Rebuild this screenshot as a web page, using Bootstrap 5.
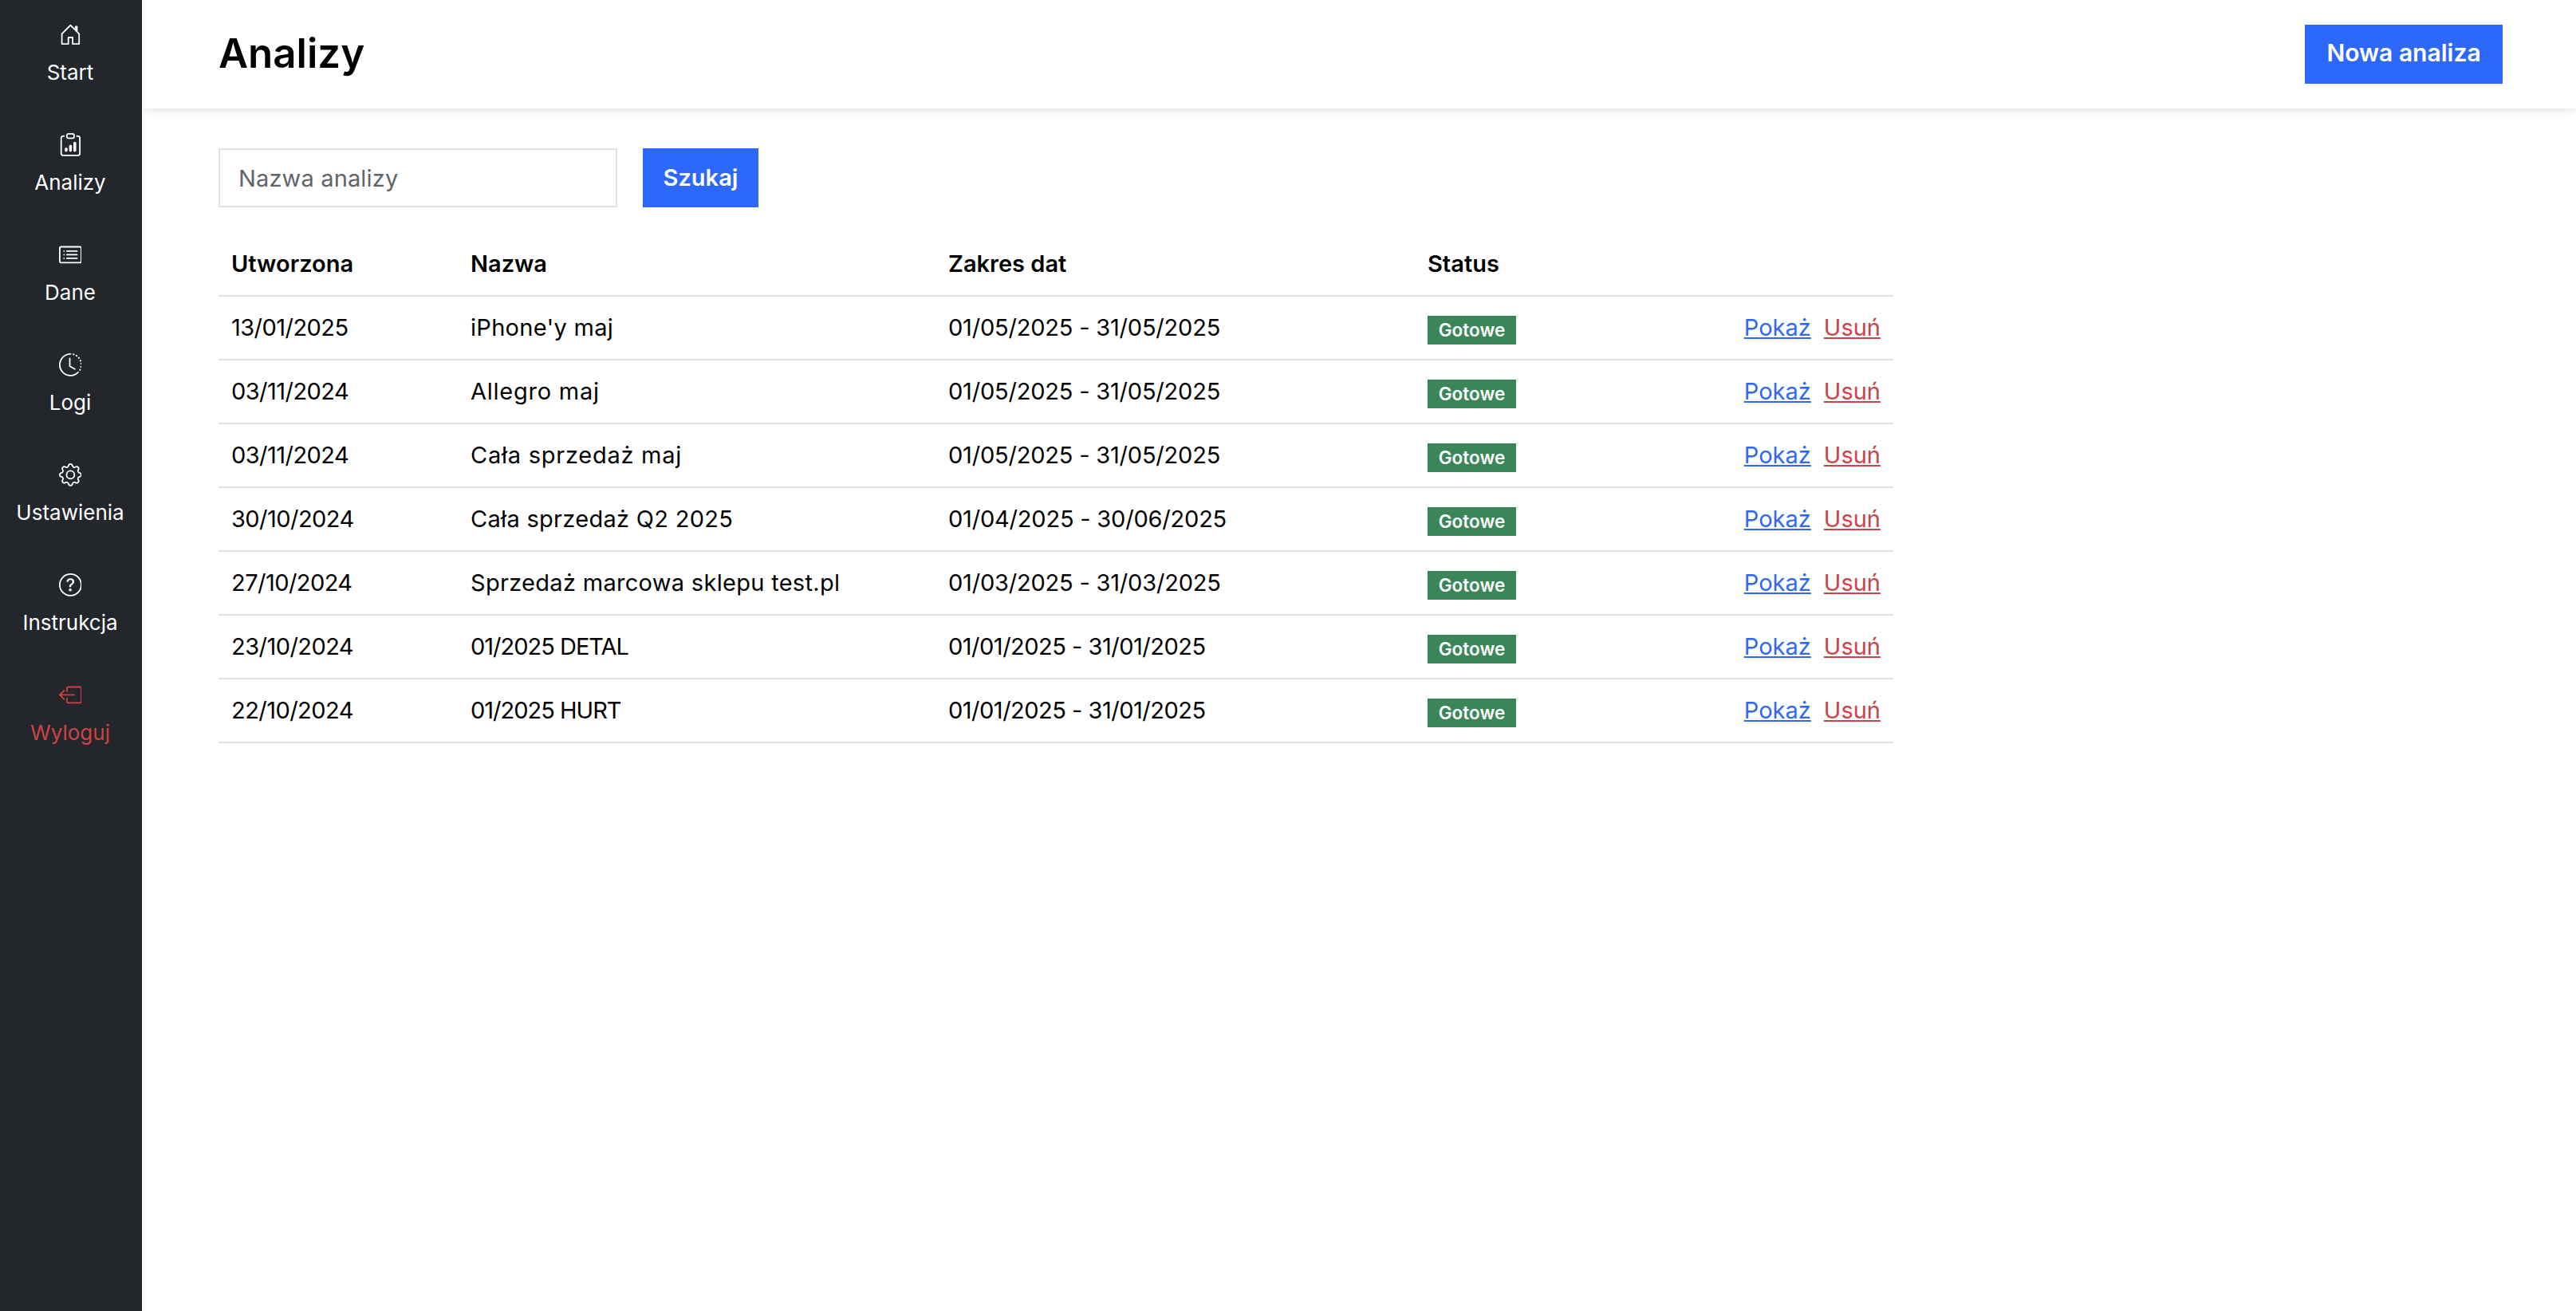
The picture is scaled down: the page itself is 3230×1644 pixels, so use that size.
<!DOCTYPE html>
<html lang="pl">
<head>
<meta charset="utf-8">
<title>Analizy</title>
<link href="https://cdn.jsdelivr.net/npm/bootstrap@5.3.0/dist/css/bootstrap.min.css" rel="stylesheet">
<style>
html,body{height:100%}
body{font-family:Inter,"Liberation Sans",sans-serif;font-size:29px;font-weight:400;color:#000;background:#fff;min-height:1644px}
.side{width:178px;background:#23272b;flex:none;padding-right:2px}
.side-item{height:138px;padding-top:29px;color:#fff;text-decoration:none;font-size:26px;line-height:36px}
.side-item:hover{color:#fff}
.side-item.out,.side-item.out:hover{color:#cf4146}
.side-item svg{width:28.8px;height:28.8px;fill:currentColor;display:block;margin-bottom:15px}
.top{height:136px;padding:0 92px 0 96px;box-shadow:0 2px 10px rgba(0,0,0,.12)}
.top h1{font-size:51px;font-weight:600;margin:0 0 3px;line-height:1}
.act{background:#2d68fb;border:0;border-radius:0;color:#fff;font-weight:600;font-size:29px;height:74px;padding:0}
.act:hover,.act:active{background:#2d68fb!important;color:#fff!important}
.act-new{width:248px;font-size:30px;padding-bottom:3px}
.act-find{width:145px}
.body-wrap{padding:50px 0 0 96px}
.find-form{gap:32px;margin-bottom:30px}
.find-input{width:500px;height:74px;border:2px solid #dee2e6;border-radius:0;font-size:29px;padding:0 23px;color:#000;letter-spacing:.15px}
.find-input::placeholder{color:#5f6468}
.data-table{width:2100px;table-layout:fixed;margin:0;--bs-table-border-color:#dee2e6}
.data-table th,.data-table td{padding:0 16px;vertical-align:middle;border-bottom:2px solid #dee2e6;color:#000}
.data-table thead tr{height:81px}
.data-table tbody tr{height:80px}
.data-table th{font-weight:600;font-size:29px;padding-top:2px}
.cw-a{width:300px}.cw-b{width:599px}.cw-c{width:601px}.cw-d{width:300px}.cw-e{width:300px}
.dt{letter-spacing:-.55px}
.rng{letter-spacing:-.2px}
.rng-t{letter-spacing:-.5px}
.nm-a{letter-spacing:.3px}
.nm-b{letter-spacing:.75px}
.nm-c{letter-spacing:-1px}
.state{background:#3b8658;color:#fff;font-weight:600;font-size:22.5px;display:inline-block;width:111px;height:36px;line-height:36px;text-align:center;vertical-align:middle;margin-top:2px}
.see{color:#2d68fb}
.del{color:#cf4146;margin-left:16px}
</style>
</head>
<body class="d-flex">
<aside class="side d-flex flex-column">
<a href="#" class="side-item d-flex flex-column align-items-center"><svg viewBox="0 0 16 16"><path d="M8.354 1.146a.5.5 0 0 0-.708 0l-6 6A.5.5 0 0 0 1.5 7.5v7a.5.5 0 0 0 .5.5h4.5a.5.5 0 0 0 .5-.5v-4h2v4a.5.5 0 0 0 .5.5H14a.5.5 0 0 0 .5-.5v-7a.5.5 0 0 0-.146-.354L13 5.793V2.5a.5.5 0 0 0-.5-.5h-1a.5.5 0 0 0-.5.5v1.293L8.354 1.146zM2.5 14V7.707l5.5-5.5 5.5 5.5V14H10v-4a.5.5 0 0 0-.5-.5h-3a.5.5 0 0 0-.5.5v4H2.5z"/></svg>Start</a>
<a href="#" class="side-item d-flex flex-column align-items-center"><svg viewBox="0 0 16 16"><path d="M4 11a1 1 0 1 1 2 0v1a1 1 0 1 1-2 0v-1zm6-4a1 1 0 1 1 2 0v5a1 1 0 1 1-2 0V7zM7 9a1 1 0 0 1 2 0v3a1 1 0 1 1-2 0V9z"/><path d="M4 1.5H3a2 2 0 0 0-2 2V14a2 2 0 0 0 2 2h10a2 2 0 0 0 2-2V3.5a2 2 0 0 0-2-2h-1v1h1a1 1 0 0 1 1 1V14a1 1 0 0 1-1 1H3a1 1 0 0 1-1-1V3.5a1 1 0 0 1 1-1h1v-1z"/><path d="M9.5 1a.5.5 0 0 1 .5.5v1a.5.5 0 0 1-.5.5h-3a.5.5 0 0 1-.5-.5v-1a.5.5 0 0 1 .5-.5h3zm-3-1A1.5 1.5 0 0 0 5 1.5v1A1.5 1.5 0 0 0 6.5 4h3A1.5 1.5 0 0 0 11 2.5v-1A1.5 1.5 0 0 0 9.5 0h-3z"/></svg>Analizy</a>
<a href="#" class="side-item d-flex flex-column align-items-center"><svg viewBox="0 0 16 16"><path d="M14.5 3a.5.5 0 0 1 .5.5v9a.5.5 0 0 1-.5.5h-13a.5.5 0 0 1-.5-.5v-9a.5.5 0 0 1 .5-.5h13zm-13-1A1.5 1.5 0 0 0 0 3.5v9A1.5 1.5 0 0 0 1.5 14h13a1.5 1.5 0 0 0 1.5-1.5v-9A1.5 1.5 0 0 0 14.5 2h-13z"/><path d="M5 8a.5.5 0 0 1 .5-.5h7a.5.5 0 0 1 0 1h-7A.5.5 0 0 1 5 8zm0-2.5a.5.5 0 0 1 .5-.5h7a.5.5 0 0 1 0 1h-7a.5.5 0 0 1-.5-.5zm0 5a.5.5 0 0 1 .5-.5h7a.5.5 0 0 1 0 1h-7a.5.5 0 0 1-.5-.5zm-1-5a.5.5 0 1 1-1 0 .5.5 0 0 1 1 0zM4 8a.5.5 0 1 1-1 0 .5.5 0 0 1 1 0zm0 2.5a.5.5 0 1 1-1 0 .5.5 0 0 1 1 0z"/></svg>Dane</a>
<a href="#" class="side-item d-flex flex-column align-items-center"><svg viewBox="0 0 16 16"><path d="M8.515 1.019A7 7 0 0 0 8 1V0a8 8 0 0 1 .589.022l-.074.997zm2.004.45a7.003 7.003 0 0 0-.985-.299l.219-.976c.383.086.76.2 1.126.342l-.36.933zm1.37.71a7.01 7.01 0 0 0-.439-.27l.493-.87a8.025 8.025 0 0 1 .979.654l-.615.789a6.996 6.996 0 0 0-.418-.302zm1.834 1.79a6.99 6.99 0 0 0-.653-.796l.724-.69c.27.285.52.59.747.91l-.818.576zm.744 1.352a7.08 7.08 0 0 0-.214-.468l.893-.45a7.976 7.976 0 0 1 .45 1.088l-.95.313a7.023 7.023 0 0 0-.179-.483zm.53 2.507a6.991 6.991 0 0 0-.1-1.025l.985-.17c.067.386.106.778.116 1.17l-1 .025zm-.131 1.538c.033-.17.06-.339.081-.51l.993.123a7.957 7.957 0 0 1-.23 1.155l-.964-.267c.046-.165.086-.332.12-.501zm-.952 2.379c.184-.29.346-.594.486-.908l.914.405c-.16.36-.345.706-.555 1.038l-.845-.535zm-.964 1.205c.122-.122.239-.248.35-.378l.758.653a8.073 8.073 0 0 1-.401.432l-.707-.707z"/><path d="M8 1a7 7 0 1 0 4.95 11.95l.707.707A8.001 8.001 0 1 1 8 0v1z"/><path d="M7.5 3a.5.5 0 0 1 .5.5v5.21l3.248 1.856a.5.5 0 0 1-.496.868l-3.5-2A.5.5 0 0 1 7 9V3.5a.5.5 0 0 1 .5-.5z"/></svg>Logi</a>
<a href="#" class="side-item d-flex flex-column align-items-center"><svg viewBox="0 0 16 16"><path d="M8 4.754a3.246 3.246 0 1 0 0 6.492 3.246 3.246 0 0 0 0-6.492zM5.754 8a2.246 2.246 0 1 1 4.492 0 2.246 2.246 0 0 1-4.492 0z"/><path d="M9.796 1.343c-.527-1.79-3.065-1.79-3.592 0l-.094.319a.873.873 0 0 1-1.255.52l-.292-.16c-1.64-.892-3.433.902-2.54 2.541l.159.292a.873.873 0 0 1-.52 1.255l-.319.094c-1.79.527-1.79 3.065 0 3.592l.319.094a.873.873 0 0 1 .52 1.255l-.16.292c-.892 1.64.901 3.434 2.541 2.54l.292-.159a.873.873 0 0 1 1.255.52l.094.319c.527 1.79 3.065 1.79 3.592 0l.094-.319a.873.873 0 0 1 1.255-.52l.292.16c1.64.893 3.434-.902 2.54-2.541l-.159-.292a.873.873 0 0 1 .52-1.255l.319-.094c1.79-.527 1.79-3.065 0-3.592l-.319-.094a.873.873 0 0 1-.52-1.255l.16-.292c.893-1.64-.902-3.433-2.541-2.54l-.292.159a.873.873 0 0 1-1.255-.52l-.094-.319zm-2.633.283c.246-.835 1.428-.835 1.674 0l.094.319a1.873 1.873 0 0 0 2.693 1.115l.291-.16c.764-.415 1.6.42 1.184 1.185l-.159.292a1.873 1.873 0 0 0 1.116 2.692l.318.094c.835.246.835 1.428 0 1.674l-.319.094a1.873 1.873 0 0 0-1.115 2.693l.16.291c.415.764-.42 1.6-1.185 1.184l-.291-.159a1.873 1.873 0 0 0-2.693 1.116l-.094.318c-.246.835-1.428.835-1.674 0l-.094-.319a1.873 1.873 0 0 0-2.692-1.115l-.292.16c-.764.415-1.6-.42-1.184-1.185l.159-.291A1.873 1.873 0 0 0 1.945 8.93l-.319-.094c-.835-.246-.835-1.428 0-1.674l.319-.094A1.873 1.873 0 0 0 3.06 4.377l-.16-.292c-.415-.764.42-1.6 1.185-1.184l.292.159a1.873 1.873 0 0 0 2.692-1.115l.094-.319z"/></svg>Ustawienia</a>
<a href="#" class="side-item d-flex flex-column align-items-center"><svg viewBox="0 0 16 16"><path d="M8 15A7 7 0 1 1 8 1a7 7 0 0 1 0 14zm0 1A8 8 0 1 0 8 0a8 8 0 0 0 0 16z"/><path d="M5.255 5.786a.237.237 0 0 0 .241.247h.825c.138 0 .248-.113.266-.25.09-.656.54-1.134 1.342-1.134.686 0 1.314.343 1.314 1.168 0 .635-.374.927-.965 1.371-.673.489-1.206 1.06-1.168 1.987l.003.217a.25.25 0 0 0 .25.246h.811a.25.25 0 0 0 .25-.25v-.105c0-.718.273-.927 1.01-1.486.609-.463 1.244-.977 1.244-2.056 0-1.511-1.276-2.241-2.673-2.241-1.267 0-2.655.59-2.75 2.286zm1.557 5.763c0 .533.425.927 1.01.927.609 0 1.028-.394 1.028-.927 0-.552-.42-.94-1.029-.94-.584 0-1.009.388-1.009.94z"/></svg>Instrukcja</a>
<a href="#" class="side-item out d-flex flex-column align-items-center"><svg viewBox="0 0 16 16"><path d="M6 12.5a.5.5 0 0 0 .5.5h8a.5.5 0 0 0 .5-.5v-9a.5.5 0 0 0-.5-.5h-8a.5.5 0 0 0-.5.5v2a.5.5 0 0 1-1 0v-2A1.5 1.5 0 0 1 6.5 2h8A1.5 1.5 0 0 1 16 3.5v9a1.5 1.5 0 0 1-1.5 1.5h-8A1.5 1.5 0 0 1 5 12.5v-2a.5.5 0 0 1 1 0v2z"/><path d="M.146 8.354a.5.5 0 0 1 0-.708l3-3a.5.5 0 1 1 .708.708L1.707 7.5H10.5a.5.5 0 0 1 0 1H1.707l2.147 2.146a.5.5 0 0 1-.708.708l-3-3z"/></svg>Wyloguj</a>
</aside>
<main class="flex-grow-1">
<header class="top d-flex align-items-center justify-content-between">
<h1>Analizy</h1>
<button class="btn act act-new">Nowa analiza</button>
</header>
<div class="body-wrap">
<form class="find-form d-flex">
<input class="form-control find-input" placeholder="Nazwa analizy">
<button type="button" class="btn act act-find">Szukaj</button>
</form>
<table class="table data-table">
<colgroup><col class="cw-a"><col class="cw-b"><col class="cw-c"><col class="cw-d"><col class="cw-e"></colgroup>
<thead><tr><th>Utworzona</th><th>Nazwa</th><th>Zakres dat</th><th>Status</th><th></th></tr></thead>
<tbody>
<tr><td class="dt">13/01/2025</td><td class="nm-a">iPhone'y maj</td><td class="rng">01/05/2025 - 31/05/2025</td><td><span class="state">Gotowe</span></td><td class="text-end"><a href="#" class="see">Pokaż</a><a href="#" class="del">Usuń</a></td></tr>
<tr><td class="dt">03/11/2024</td><td class="nm-b">Allegro maj</td><td class="rng">01/05/2025 - 31/05/2025</td><td><span class="state">Gotowe</span></td><td class="text-end"><a href="#" class="see">Pokaż</a><a href="#" class="del">Usuń</a></td></tr>
<tr><td class="dt">03/11/2024</td><td class="nm-b">Cała sprzedaż maj</td><td class="rng">01/05/2025 - 31/05/2025</td><td><span class="state">Gotowe</span></td><td class="text-end"><a href="#" class="see">Pokaż</a><a href="#" class="del">Usuń</a></td></tr>
<tr><td class="dt">30/10/2024</td><td class="nm-a">Cała sprzedaż Q2 2025</td><td class="rng">01/04/2025 - 30/06/2025</td><td><span class="state">Gotowe</span></td><td class="text-end"><a href="#" class="see">Pokaż</a><a href="#" class="del">Usuń</a></td></tr>
<tr><td class="dt">27/10/2024</td><td class="nm-a">Sprzedaż marcowa sklepu test.pl</td><td class="rng">01/03/2025 - 31/03/2025</td><td><span class="state">Gotowe</span></td><td class="text-end"><a href="#" class="see">Pokaż</a><a href="#" class="del">Usuń</a></td></tr>
<tr><td class="dt">23/10/2024</td><td class="nm-c">01/2025 DETAL</td><td class="rng-t">01/01/2025 - 31/01/2025</td><td><span class="state">Gotowe</span></td><td class="text-end"><a href="#" class="see">Pokaż</a><a href="#" class="del">Usuń</a></td></tr>
<tr><td class="dt">22/10/2024</td><td class="nm-c">01/2025 HURT</td><td class="rng-t">01/01/2025 - 31/01/2025</td><td><span class="state">Gotowe</span></td><td class="text-end"><a href="#" class="see">Pokaż</a><a href="#" class="del">Usuń</a></td></tr>
</tbody>
</table>
</div>
</main>
<script src="https://cdn.jsdelivr.net/npm/bootstrap@5.3.0/dist/js/bootstrap.bundle.min.js"></script>
</body>
</html>
